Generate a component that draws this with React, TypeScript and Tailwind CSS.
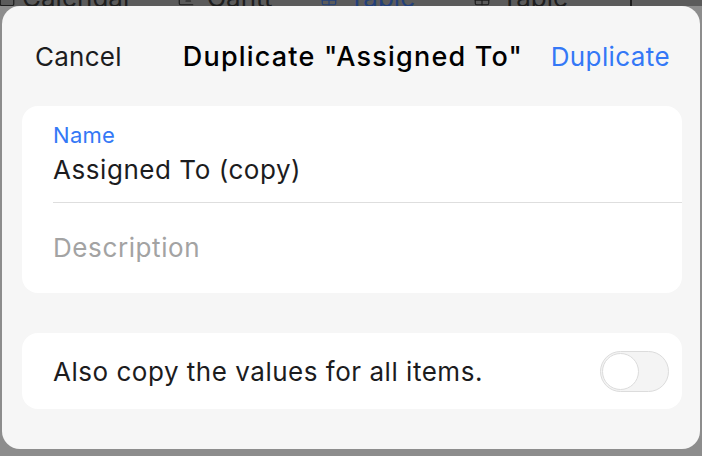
import React from 'react';
import { Calendar, ChartGantt, Table } from 'lucide-react';

const Toggle: React.FC<{ on?: boolean }> = ({ on = false }) => (
  <div
    className={`w-[69px] h-[41px] rounded-full border-[1.5px] border-[#dcdcdc] p-[1px] flex ${
      on ? 'bg-[#34c759] justify-end' : 'bg-[#f4f4f4] justify-start'
    }`}
  >
    <div className="w-[37px] h-[37px] rounded-full bg-white border-[1.5px] border-[#dcdcdc]" />
  </div>
);

export default function App() {
  return (
    <div className="w-[702px] h-[456px] overflow-hidden bg-[#8d8d8d] font-['Inter','Liberation_Sans',sans-serif]">
      {/* toolbar of the page behind the sheet, mostly covered */}
      <div className="h-[6px] overflow-hidden bg-[#5b5b5b] text-[26px] text-[#1e1e1e] flex items-end">
        <div className="flex items-center gap-[120px] -mb-[6px] leading-[28px] whitespace-nowrap">
          <div className="flex items-center gap-[6px] -ml-[2px]">
            <Calendar size={18} strokeWidth={1.6} />
            <span>Calendar</span>
          </div>
          <div className="flex items-center gap-[12px] -ml-[76px]">
            <ChartGantt size={18} strokeWidth={1.6} />
            <span>Gantt</span>
          </div>
          <div className="flex items-center gap-[10px] -ml-[72px] text-[#23407a]">
            <Table size={18} strokeWidth={1.6} />
            <span>Table</span>
          </div>
          <div className="flex items-center gap-[10px] -ml-[62px]">
            <Table size={18} strokeWidth={1.6} />
            <span>Table</span>
            <span className="ml-[52px] w-[2px] h-[28px] bg-[#1e1e1e]" />
          </div>
        </div>
      </div>

      {/* sheet */}
      <div className="ml-[2px] w-[698px] h-[443px] rounded-[18px] bg-[#f6f6f6] pl-[20px] pr-[18px]">
        <div className="h-[100px] flex items-center pt-[2px] text-[26px] leading-[30px]">
          <span className="text-[#1c1c1e] pl-[13px] tracking-[0.25px]">Cancel</span>
          <span className="ml-[61px] font-medium text-black text-[27px] tracking-[1.2px]">Duplicate "Assigned To"</span>
          <span className="ml-auto text-[#3478f6] pr-[12px] tracking-[0.4px]">Duplicate</span>
        </div>

        <div className="bg-white rounded-[16px] pl-[31px]">
          <div className="h-[97px] pt-[16px] border-b border-[#dedede]">
            <div className="text-[22px] leading-[26px] text-[#3478f6] tracking-[0.3px]">Name</div>
            <div className="mt-[6px] text-[26px] leading-[31px] text-[#1c1c1e] tracking-[0.55px]">Assigned To (copy)</div>
          </div>
          <div className="h-[90px] flex items-center pb-[1px] text-[26px] text-[#a3a3a3] tracking-[0.6px]">
            Description
          </div>
        </div>

        <div className="mt-[40px] bg-white rounded-[16px] h-[76px] pl-[31px] pr-[13px] flex items-center justify-between">
          <span className="text-[26px] pt-[1px] text-[#1c1c1e] tracking-[0.52px]">Also copy the values for all items.</span>
          <Toggle />
        </div>
      </div>
    </div>
  );
}
